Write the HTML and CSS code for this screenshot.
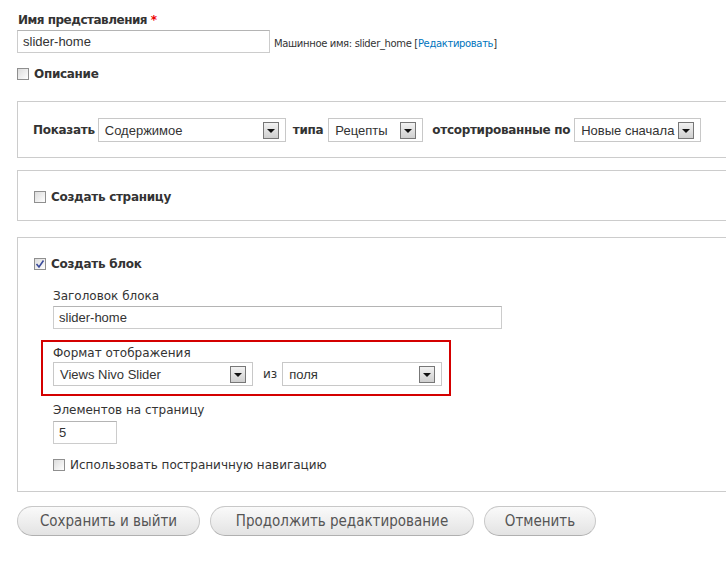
FILE: index.html
```html
<!DOCTYPE html>
<html lang="ru">
<head>
<meta charset="utf-8">
<title>Views</title>
<link rel="stylesheet" href="styles.css">
</head>
<body>
<div class="page">
  <div class="field name-field">
    <div class="label bold name-label">Имя представления <span class="req">*</span></div>
    <div class="row">
      <div class="input name-input">slider-home</div>
      <div class="machine">Машинное имя: slider_home [<a href="#">Редактировать</a>]</div>
    </div>
  </div>

  <div class="check-row desc">
    <span class="cb"></span><span class="bold big">Описание</span>
  </div>

  <div class="fs fs-show">
    <div class="show-row">
      <span class="bold">Показать</span>
      <div class="select w-content"><span>Содержимое</span><i class="arrow"></i></div>
      <span class="bold">типа</span>
      <div class="select w-type"><span>Рецепты</span><i class="arrow"></i></div>
      <span class="bold">отсортированные по</span>
      <div class="select w-sort"><span>Новые сначала</span><i class="arrow"></i></div>
    </div>
  </div>

  <div class="fs fs-page">
    <div class="check-row"><span class="cb"></span><span class="bold big">Создать страницу</span></div>
  </div>

  <div class="fs fs-block">
    <div class="check-row"><span class="cb checked"><svg viewBox="0 0 10 10" width="10" height="10"><path d="M1.5 5 L4 8 L8.5 1.5" fill="none" stroke="#3a4a9a" stroke-width="1.6"/></svg></span><span class="bold big">Создать блок</span></div>
    <div class="block-body">
      <div class="label">Заголовок блока</div>
      <div class="input title-input">slider-home</div>

      <div class="redbox">
        <div class="label">Формат отображения</div>
        <div class="fmt-row">
          <div class="select w-fmt"><span>Views Nivo Slider</span><i class="arrow"></i></div>
          <span class="iz">из</span>
          <div class="select w-fields"><span>поля</span><i class="arrow"></i></div>
        </div>
      </div>

      <div class="label items-label">Элементов на страницу</div>
      <div class="input num-input">5</div>

      <div class="check-row pager"><span class="cb"></span><span>Использовать постраничную навигацию</span></div>
    </div>
  </div>

  <div class="buttons">
    <button class="btn b1">Сохранить и выйти</button>
    <button class="btn b2">Продолжить редактирование</button>
    <button class="btn b3">Отменить</button>
  </div>
</div>
</body>
</html>
```
FILE: styles.css
```css
html, body {
  margin: 0;
  padding: 0;
  background: #fff;
}
body {
  font-family: "DejaVu Sans", Verdana, sans-serif;
  font-size: 12px;
  color: #333;
  overflow: hidden;
  width: 726px;
  height: 566px;
}
.page {
  padding: 12px 0 0 17px;
}
.bold {
  font-weight: bold;
  color: #333;
}
.big {
  font-size: 12px;
  letter-spacing: -0.3px;
}
.req {
  color: #e00;
}
.label {
  line-height: 16px;
  height: 16px;
}
.name-label {
  padding-left: 1px;
  letter-spacing: -0.5px;
}
.row {
  display: flex;
  align-items: center;
  margin-top: 2px;
}
.input {
  box-sizing: border-box;
  border: 1px solid #ccc;
  border-top-color: #b4b4b4;
  font-family: "Liberation Sans", Arial, sans-serif;
  font-size: 13px;
  color: #333;
  height: 23px;
  line-height: 21px;
  padding-left: 5px;
  background: #fff;
}
.name-input {
  width: 253px;
}
.machine {
  font-size: 10px;
  letter-spacing: -0.35px;
  margin-left: 4px;
  margin-top: 3px;
  color: #333;
}
.machine a {
  color: #0074bd;
  text-decoration: none;
}
.check-row {
  display: flex;
  align-items: center;
  height: 16px;
}
.cb {
  box-sizing: border-box;
  width: 12px;
  height: 12px;
  border: 1px solid #8f8f8f;
  background: linear-gradient(135deg, #dcdcdc 0%, #f4f4f4 70%, #fff 100%);
  margin-right: 5px;
  display: flex;
  align-items: center;
  justify-content: center;
  flex-shrink: 0;
}
.cb svg {
  display: block;
}
.desc {
  margin-top: 13px;
}
.fs {
  box-sizing: border-box;
  border: 1px solid #ccc;
  width: 740px;
}
.fs-show {
  margin-top: 19px;
  height: 57px;
  padding: 16px 0 0 15px;
}
.show-row {
  display: flex;
  align-items: center;
}
.show-row .bold {
  font-size: 12px;
  letter-spacing: -0.3px;
}
.select {
  box-sizing: border-box;
  height: 24px;
  border: 1px solid #c8c8c8;
  display: flex;
  align-items: center;
  justify-content: space-between;
  padding: 0 6px 0 6px;
  font-family: "Liberation Sans", Arial, sans-serif;
  font-size: 13px;
  color: #333;
  background: #fff;
}
.arrow {
  box-sizing: border-box;
  width: 16px;
  height: 17px;
  border: 1px solid #777;
  background: linear-gradient(#f2f2f2, #cfcfcf);
  position: relative;
  display: block;
}
.arrow::after {
  content: "";
  position: absolute;
  left: 3px;
  top: 6px;
  border-left: 4px solid transparent;
  border-right: 4px solid transparent;
  border-top: 4px solid #111;
}
.w-content {
  width: 188px;
  margin: 0 7px 0 3px;
}
.w-type {
  width: 95px;
  margin: 0 9px 0 5px;
}
.w-sort {
  width: 127px;
  margin-left: 4px;
}
.fs-page {
  margin-top: 12px;
  height: 51px;
  padding: 18px 0 0 16px;
}
.fs-block {
  margin-top: 16px;
  height: 255px;
  padding: 18px 0 0 16px;
}
.block-body {
  padding: 0 0 0 19px;
  margin-top: 16px;
}
.block-body .label {
  font-size: 12px;
}
.title-input {
  width: 449px;
  margin-top: 2px;
}
.redbox {
  box-sizing: border-box;
  border: 2px solid #d40000;
  width: 410px;
  height: 56px;
  margin: 11px 0 0 -12px;
  padding: 3px 0 0 10px;
}
.fmt-row {
  display: flex;
  align-items: center;
  margin-top: 1px;
}
.w-fmt {
  width: 200px;
}
.iz {
  margin: 0 5px 0 10px;
  font-size: 12px;
}
.w-fields {
  width: 160px;
}
.items-label {
  margin-top: 6px;
}
.num-input {
  width: 64px;
  margin-top: 3px;
}
.pager {
  margin-top: 13px;
  font-size: 12px;
}
.buttons {
  display: flex;
  margin-top: 14px;
}
.btn {
  box-sizing: border-box;
  height: 30px;
  border: 1px solid #c8c8c8;
  border-bottom-color: #b0b0b0;
  border-radius: 15px;
  background: linear-gradient(#fafafa, #e3e3e3);
  font-family: "DejaVu Sans Condensed", "DejaVu Sans", sans-serif;
  font-size: 15px;
  color: #555;
  padding: 0;
  margin-right: 10px;
}
.b1 { width: 183px; }
.b2 { width: 264px; }
.b3 { width: 112px; }
```
